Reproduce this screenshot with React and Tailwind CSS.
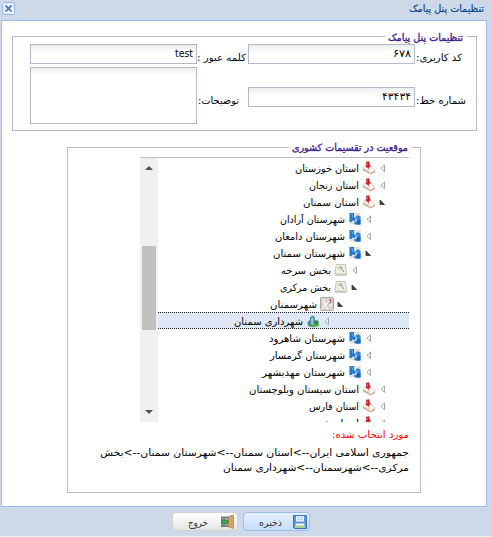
const F = "font-['DejaVu_Sans',sans-serif]";

function T({ children, w, className = '' }) {
  return (
    <svg className="shrink-0 overflow-visible" width={w} height="16">
      <text x={w} y="12" direction="rtl" textLength={w} lengthAdjust="spacingAndGlyphs" className={className}>{children}</text>
    </svg>
  );
}

function NodeIcon({ type }) {
  if (type === 'pin')
    return (
      <svg width="14" height="14" viewBox="0 0 14 14">
        <path d="M.8 7.5L4 5l9 4.500v1.500L8.500 13.500 1 9.200z" fill="#c9a388" />
        <path d="M.8 7L3 4.300l5-.8 5 5.700-4.500 3z" fill="#fbf5f0" stroke="#dcc5b6" strokeWidth=".7" />
        <path d="M5 8.500l3 1.500" stroke="#d9c2b5" strokeWidth=".8" />
        <path d="M4 .8l3.200-.5.8 4 1.200.9-2.200.8-.4 2.500-1.200-2-2-.2.900-1.700z" fill="#c5202a" />
        <path d="M5.200 1.400l.6 3" stroke="#ee7f7f" strokeWidth=".7" />
      </svg>
    );
  if (type === 'blue')
    return (
      <svg width="14" height="14" viewBox="0 0 14 14">
        <rect x="1.500" y="1" width="11" height="11.500" fill="#e4e0d6" />
        <path d="M1.500 1h4.500v4.200l2 1.300-1.200 2.500-2.300-.6-1 1.600h-2z" fill="#2477cf" />
        <path d="M7.300 5l2.200-1.700 3 1.200v8H6.800l-1-2 2.500-1.200.7-2z" fill="#2f86dc" />
        <path d="M9.500 8.500l3-1v5H8z" fill="#1c62b4" />
        <path d="M3 2.500h1.500v3" stroke="#5aa5ea" fill="none" />
      </svg>
    );
  if (type === 'map')
    return (
      <svg width="14" height="14" viewBox="0 0 14 14">
        <path d="M2 1.500h9.500l1.500 10-.8 1.200H1.200L.7 11.500z" fill="#c4c3b8" />
        <path d="M2.200 1.500h9.300l1.300 9.700H1z" fill="#efede4" stroke="#c0bfb2" strokeWidth=".8" />
        <path d="M4 5.500l2-2 1.800.6.2 2.400 2 2.500" stroke="#8d958d" fill="none" />
        <circle cx="6.500" cy="5.500" r="1" fill="#b9c087" />
      </svg>
    );
  if (type === 'road')
    return (
      <svg width="14" height="14" viewBox="0 0 14 14">
        <rect x=".5" y=".5" width="13" height="13" rx="1" fill="#d8d3cf" stroke="#aaa5a0" />
        <path d="M1.500 12.500L6 7.500 11.500 2M4 1.500v5l3 1 5 1M7 7.500V13" stroke="#f6f3f0" strokeWidth="1.300" fill="none" />
        <path d="M10.500 2v3.500" stroke="#bd5046" strokeWidth="1.500" />
        <path d="M7 9l3-3.500" stroke="#8c8580" strokeWidth=".8" />
      </svg>
    );
  return (
    <svg width="14" height="14" viewBox="0 0 14 14">
      <ellipse cx="7.500" cy="11" rx="6" ry="2.200" fill="#6bb55a" />
      <path d="M1.500 10.500V8L4 6V3.500L7 1.500l2 2V10l-3 1.500z" fill="#4f8399" />
      <path d="M5 4.500l2.500-1.500v8L5 10z" fill="#9cc4d2" />
      <circle cx="10.500" cy="8.500" r="2.300" fill="#2f8a4c" />
      <path d="M3 11.500l3 .8 4-.8" stroke="#3e9b3a" fill="none" />
    </svg>
  );
}

const rows = [
  [0, 0, 'pin', 'استان خوزستان', 64],
  [0, 0, 'pin', 'استان زنجان', 50],
  [0, 1, 'pin', 'استان سمنان', 56],
  [1, 0, 'blue', 'شهرستان آرادان', 65],
  [1, 0, 'blue', 'شهرستان دامغان', 70],
  [1, 1, 'blue', 'شهرستان سمنان', 72],
  [2, 0, 'map', 'بخش سرخه', 50],
  [2, 1, 'map', 'بخش مرکزی', 51],
  [3, 1, 'road', 'شهرسمنان', 47],
  [4, 0, 'city', 'شهرداری سمنان', 69],
  [1, 0, 'blue', 'شهرستان شاهرود', 76],
  [1, 0, 'blue', 'شهرستان گرمسار', 75],
  [1, 0, 'blue', 'شهرستان مهدیشهر', 83],
  [0, 0, 'pin', 'استان سیستان وبلوچستان', 110],
  [0, 0, 'pin', 'استان فارس', 50],
  [0, 0, 'pin', 'استان قم', 42],
];
const indents = ['pr-[22px]', 'pr-[36px]', 'pr-[50px]', 'pr-[64px]', 'pr-[78px]'];

function Row({ row }) {
  const [depth, open, type, label, w] = row;
  return (
    <div dir="rtl" className={`flex h-[17px] shrink-0 items-center ${indents[depth]} ${type === 'city' ? 'border-y border-dotted border-[#222] bg-[#dfe8f6]' : ''}`}>
      <svg className="ml-px shrink-0" width="10" height="11" viewBox="0 0 10 11">
        {open ? <path d="M3 4v4.500h4.500z" fill="#444" stroke="#333" strokeWidth=".8" /> : <path d="M7.500 3v6.500L4 6.250z" fill="#fff" stroke="#a5a5a5" />}
      </svg>
      <span className="ml-[3px] shrink-0"><NodeIcon type={type} /></span>
      <T w={w}>{label}</T>
    </div>
  );
}

const field = 'flex w-[167px] shrink-0 justify-end border border-[#b5b8c8] bg-linear-to-b from-[#eceeee] to-white to-[8px] pr-[3px]';
const legend = 'fill-[#3b1a8c] stroke-[#3b1a8c] stroke-[0.35]';

export default function App() {
  return (
    <div className={`flex h-[537px] w-[491px] flex-col overflow-hidden border-b border-[#eef3f9] bg-[#cdd9e8] text-[10px] ${F}`}>
      <div className="flex h-5 shrink-0 items-start justify-between pr-[7px] pl-0.5">
        <svg className="mt-0.5" width="13" height="13" viewBox="0 0 13 13">
          <rect x=".5" y=".5" width="12" height="12" rx="1.5" fill="#e9f2fc" stroke="#96bae6" />
          <path d="M3.5 3.5l6 6m0-6l-6 6" stroke="#4a68ad" strokeWidth="1.7" />
        </svg>
        <T w={75} className="fill-[#04408c] stroke-[#04408c] stroke-[0.15]">تنظیمات پنل پیامک</T>
      </div>
      <div className="ml-px flex h-[487px] w-[486px] shrink-0 flex-col border border-[#99bce8] bg-white pt-[15px] pl-[10px]">
        <div className="h-[95px] w-[465px] shrink-0 border border-[#b5b8c8]">
          <div className="-mt-[8px] mr-[9px] flex h-[15px] justify-end">
            <span className="flex bg-white pr-1 pl-[3px]"><T w={75} className={legend}>تنظیمات پنل پیامک</T></span>
          </div>
          <div className="flex pl-[17px]">
            <div className="flex w-[167px] flex-col gap-[3px]">
              <div className={`${field} h-5`}><T w={18}>test</T></div>
              <div className={`${field} h-[57px]`} />
            </div>
            <div className="flex w-[51px] flex-col items-end gap-[27px] pt-[5px]">
              <div className="pr-0.5"><T w={49}>کلمه عبور :</T></div>
              <div className="pr-[9px]"><T w={41}>توضیحات:</T></div>
            </div>
            <div className="flex w-[167px] flex-col gap-[23px]">
              <div className={`${field} h-5`}><T w={18}>۶۷۸</T></div>
              <div className={`${field} h-5`}><T w={29}>۴۳۴۳۴</T></div>
            </div>
            <div className="flex w-[52px] flex-col items-end gap-[27px] pt-[5px]">
              <div className="pr-[5px]"><T w={46}>کد کاربری:</T></div>
              <div className="pr-px"><T w={50}>شماره خط:</T></div>
            </div>
          </div>
        </div>
        <div className="mt-4 ml-[55px] flex h-[346px] w-[354px] shrink-0 flex-col border border-[#b5b8c8]">
          <div className="-mt-[9px] mr-[8px] flex h-[18px] justify-end">
            <span className="flex h-[16px] bg-white pr-1 pl-[3px]"><T w={116} className={legend}>موقعیت در تقسیمات کشوری</T></span>
          </div>
          <div className="ml-[72px] flex h-[265px] w-[269px] shrink-0 overflow-hidden border-t border-[#c0c0c0]">
            <div className="flex w-[18px] shrink-0 flex-col items-center bg-[#f0f0f0]">
              <svg className="mt-[8px]" width="8" height="4"><path d="M0 4l4-4 4 4z" fill="#505050" /></svg>
              <div className="mt-[76px] h-[84px] w-[14px] bg-[#c1c1c1]" />
              <svg className="mt-[80px]" width="8" height="4"><path d="M0 0h8L4 4z" fill="#505050" /></svg>
            </div>
            <div className="flex grow flex-col overflow-hidden pt-px">
              {rows.map((row, i) => <Row key={i} row={row} />)}
            </div>
          </div>
          <div className="mr-[11px] flex flex-col items-end pt-[4px]">
            <T w={77} className="fill-[#ff0000]">مورد انتخاب شده:</T>
            <div className="mt-[2px] flex h-[15px]"><T w={309}>{'جمهوری اسلامی ایران-->استان سمنان-->شهرستان سمنان-->بخش'}</T></div>
            <T w={186}>{'مرکزی-->شهرسمنان-->شهرداری سمنان'}</T>
          </div>
        </div>
      </div>
      <div className="flex pt-[5px] pl-[172px] gap-[5px]">
        <div className="flex h-[19px] w-[66px] items-center justify-end rounded-sm border border-[#d1d1d1] bg-linear-to-b from-white via-[#f3f3f3] to-[#e5e5e5] pr-0.5">
          <div className="mr-[12px]"><T w={20} className="fill-[#333]">خروج</T></div>
          <svg width="15" height="15" viewBox="0 0 15 15">
            <rect x="1" y="2.5" width="9" height="10.500" fill="#777b80" />
            <rect x="2.500" y="4" width="7" height="7.500" fill="#9da2a6" />
            <path d="M8.500 2.500l5-1.500v13.500l-5-1.500z" fill="#d7a262" stroke="#a9733a" strokeWidth=".6" />
            <path d="M1 7.800l3.500-3v1.700h3.500v3H4.500v1.500z" fill="#3aa04a" stroke="#237a35" strokeWidth=".5" />
          </svg>
        </div>
        <div className="flex h-[19px] w-[67px] items-center justify-end rounded-sm border border-[#9ebfe8] bg-linear-to-b from-[#e4f1ff] via-[#d6e8fe] to-[#c4dcf8] pr-0.5">
          <div className="mr-[11px]"><T w={23} className="fill-[#333]">ذخیره</T></div>
          <svg width="14" height="14" viewBox="0 0 14 14">
            <path d="M.5.5h13v13h-12l-1-1z" fill="#5b95d2" stroke="#3d72b4" />
            <rect x="3" y="1" width="8" height="5.500" fill="#e9f2fb" />
            <path d="M4 2.500h6M4 4.500h6" stroke="#a9c8e8" strokeWidth=".8" />
            <rect x="2.500" y="8.500" width="9" height="4.500" fill="#f3f7f5" />
            <path d="M3 10.500h8V13H3z" fill="#a9d08a" />
          </svg>
        </div>
      </div>
    </div>
  );
}
